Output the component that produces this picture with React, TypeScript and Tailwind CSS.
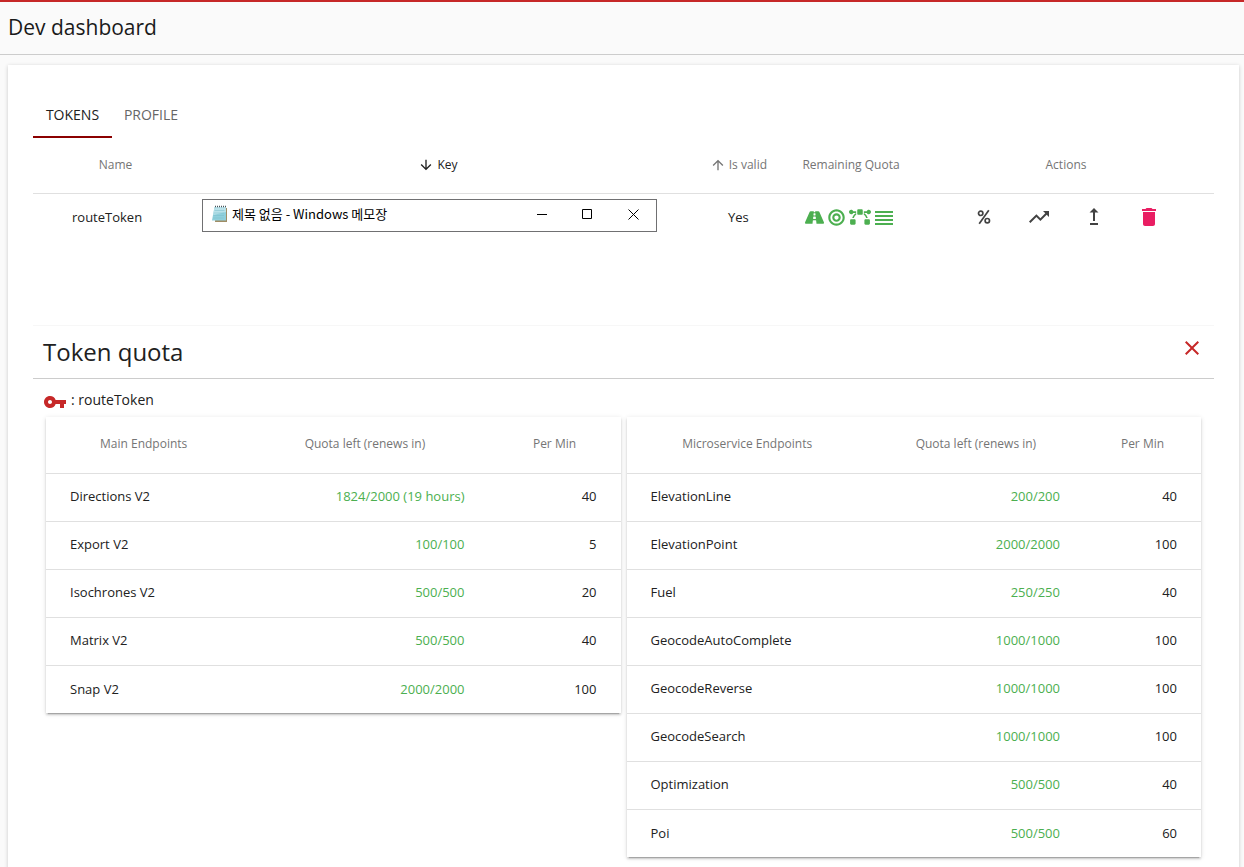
import type { ReactNode } from "react";
import { FaBezierCurve, FaBullseye, FaRoad } from "react-icons/fa";
import {
  MdArrowDownward,
  MdArrowUpward,
  MdClose,
  MdDelete,
  MdTrendingUp,
  MdVpnKey,
} from "react-icons/md";

type Endpoint = { name: string; quota: string; perMin: number };

const mainEndpoints: Endpoint[] = [
  { name: "Directions V2", quota: "1824/2000 (19 hours)", perMin: 40 },
  { name: "Export V2", quota: "100/100", perMin: 5 },
  { name: "Isochrones V2", quota: "500/500", perMin: 20 },
  { name: "Matrix V2", quota: "500/500", perMin: 40 },
  { name: "Snap V2", quota: "2000/2000", perMin: 100 },
];

const microEndpoints: Endpoint[] = [
  { name: "ElevationLine", quota: "200/200", perMin: 40 },
  { name: "ElevationPoint", quota: "2000/2000", perMin: 100 },
  { name: "Fuel", quota: "250/250", perMin: 40 },
  { name: "GeocodeAutoComplete", quota: "1000/1000", perMin: 100 },
  { name: "GeocodeReverse", quota: "1000/1000", perMin: 100 },
  { name: "GeocodeSearch", quota: "1000/1000", perMin: 100 },
  { name: "Optimization", quota: "500/500", perMin: 40 },
  { name: "Poi", quota: "500/500", perMin: 60 },
];

function NotepadIcon() {
  return (
    <svg viewBox="0 0 17 18" className="h-[18px] w-[17px]" aria-hidden="true">
      <path d="M5 3h11v14H4z" fill="#a08c64" />
      <path d="M3.5 2H15v13.5H1z" fill="#8fcfdc" />
      <path d="M3.5 2H15v5L2.3 10z" fill="#b9e2ea" />
      <path d="M3.5 5.5h10M3 8h10M2.5 10.5h10.5M2 13h10.5" stroke="#78bccb" strokeWidth=".5" />
      <path d="M4 1.5h11" stroke="#47565c" strokeWidth="1.5" strokeDasharray="1 1" />
    </svg>
  );
}

function LinesIcon() {
  return (
    <svg viewBox="0 0 18 16" className="h-4 w-[18px]" fill="currentColor" aria-hidden="true">
      <path d="M0 2h18v2H0zM0 6h18v2H0zM0 10h18v2H0zM0 14h18v2H0z" />
    </svg>
  );
}

function PercentIcon() {
  return (
    <svg viewBox="0 0 14 16" className="h-4 w-3.5" fill="none" stroke="currentColor" strokeWidth="1.7" aria-hidden="true">
      <circle cx="3.7" cy="4.3" r="2.2" />
      <circle cx="10.3" cy="11.7" r="2.2" />
      <path d="M11.8 1.2 2.2 14.8" />
    </svg>
  );
}

function PublishIcon() {
  return (
    <svg viewBox="0 0 10 18" className="h-[18px] w-2.5" fill="currentColor" aria-hidden="true">
      <path d="M5 0 9.5 4.5H6V13H4V4.5H.5zM1 15h8v2H1z" />
    </svg>
  );
}

function Action({ label, className, children }: { label: string; className?: string; children: ReactNode }) {
  return (
    <button type="button" aria-label={label} className={"flex size-6 items-center justify-center " + (className ?? "")}>
      {children}
    </button>
  );
}

function MemoWindow() {
  return (
    <div className="flex h-[33px] w-full items-start border border-[#707072] bg-white pt-[5px] pl-2 text-black">
      <div className="flex flex-1 items-center gap-1 font-['Noto_Sans_CJK_KR',sans-serif] text-[13px] leading-[18px]">
        <NotepadIcon />
        <span>제목 없음 - Windows 메모장</span>
      </div>
      <div className="flex">
        <button type="button" aria-label="Minimize" className="flex h-5 w-[46px] items-center justify-center">
          <svg viewBox="0 0 11 11" className="size-[11px]" stroke="currentColor"><path d="M0 5.5h10" /></svg>
        </button>
        <button type="button" aria-label="Maximize" className="flex h-5 w-[45px] items-center justify-center">
          <svg viewBox="0 0 11 11" className="size-[11px]" fill="none" stroke="currentColor"><path d="M.5.5h9v9h-9z" /></svg>
        </button>
        <button type="button" aria-label="Close" className="flex h-5 w-[46px] items-center justify-center">
          <svg viewBox="0 0 11 11" className="size-[11px]" stroke="currentColor"><path d="m.5.5 10 10M10.5.5l-10 10" /></svg>
        </button>
      </div>
    </div>
  );
}

function QuotaTable({ title, rows, nameCol, minCol }: { title: string; rows: Endpoint[]; nameCol: string; minCol: string }) {
  return (
    <div className="bg-white shadow-[0_3px_1px_-2px_rgba(0,0,0,0.2),0_2px_2px_0_rgba(0,0,0,0.14),0_1px_5px_0_rgba(0,0,0,0.12)]">
      <table className="w-full table-fixed border-collapse text-[13px]">
        <colgroup>
          <col className={nameCol} />
          <col />
          <col className={minCol} />
        </colgroup>
        <thead>
          <tr className="h-14 text-[12px] text-[#757575]">
            <th className="pb-0.5 font-normal">{title}</th>
            <th className="pb-0.5 font-normal">Quota left (renews in)</th>
            <th className="pb-0.5 font-normal">Per Min</th>
          </tr>
        </thead>
        <tbody>
          {rows.map((row) => (
            <tr key={row.name} className="h-12 border-t border-[#e0e0e0]">
              <td className="px-6">{row.name}</td>
              <td className="px-6 text-right text-[#4caf50]">{row.quota}</td>
              <td className="px-6 text-right">{row.perMin}</td>
            </tr>
          ))}
        </tbody>
      </table>
    </div>
  );
}

export default function App() {
  return (
    <div className="min-h-screen border-t-2 border-[#c62828] bg-[#fafafa] font-['Open_Sans','Noto_Sans_CJK_KR',sans-serif] text-[#212121]">
      <header className="flex h-[53px] items-center border-b border-[#cccccc] px-2">
        <h1 className="text-[21px] font-medium text-[#1a1a1a]">Dev dashboard</h1>
      </header>
      <div className="pt-2.5 pr-[5px] pl-2">
        <main className="bg-white px-[25px] pt-7 pb-6 shadow-[0_1px_4px_rgba(0,0,0,0.2)]">
          <nav role="tablist" className="flex text-[14px]">
            <button role="tab" aria-selected="true" className="h-[45px] w-[79px] border-b-2 border-[#8b0000]">TOKENS</button>
            <button role="tab" aria-selected="false" className="h-[45px] w-[78px] border-b-2 border-transparent text-[#666666]">PROFILE</button>
          </nav>
          <table className="w-full table-fixed border-collapse text-[13px]">
            <colgroup>
              <col className="w-[165px]" />
              <col />
              <col className="w-[106px]" />
              <col className="w-[134px]" />
              <col className="w-[296px]" />
            </colgroup>
            <thead>
              <tr className="h-[55px] border-b border-[#e0e0e0] text-[12px] text-[#757575]">
                <th className="font-normal">Name</th>
                <th className="font-normal text-[#212121]">
                  <span className="flex items-center justify-center gap-[3px]"><MdArrowDownward size={16} />Key</span>
                </th>
                <th className="pr-[17px] font-normal">
                  <span className="flex items-center justify-end gap-[3px]"><MdArrowUpward size={16} />Is valid</span>
                </th>
                <th className="font-normal">Remaining Quota</th>
                <th className="font-normal">Actions</th>
              </tr>
            </thead>
            <tbody>
              <tr className="h-12">
                <td className="pl-[39px]">routeToken</td>
                <td className="pr-[21px] pb-1 pl-1"><MemoWindow /></td>
                <td className="pl-[50px]">Yes</td>
                <td className="pl-[21px]">
                  <div className="flex items-center gap-1 text-[#4caf50]">
                    <FaRoad size={19} /><FaBullseye size={17} /><FaBezierCurve size={22} /><LinesIcon />
                  </div>
                </td>
                <td>
                  <div className="flex items-center justify-center gap-[31px] text-[#424242]">
                    <Action label="Percent"><PercentIcon /></Action>
                    <Action label="Usage"><MdTrendingUp size={24} /></Action>
                    <Action label="Publish"><PublishIcon /></Action>
                    <Action label="Delete" className="text-[#e91e63]"><MdDelete size={24} /></Action>
                  </div>
                </td>
              </tr>
            </tbody>
          </table>
          <section className="mt-[84px] border-t border-[#f7f7f7]">
            <div className="flex h-[53px] items-center justify-between border-b border-[#cccccc] px-2.5">
              <h2 className="text-[24px]">Token quota</h2>
              <button type="button" aria-label="Close token quota" className="mb-2 text-[#c62828]"><MdClose size={24} /></button>
            </div>
            <div className="flex h-[38px] items-start gap-1 px-2.5 pt-[11px] text-[14px] leading-5">
              <MdVpnKey size={24} className="text-[#c62828]" />
              <span>: routeToken</span>
            </div>
            <div className="grid grid-cols-2 items-start gap-1.5 px-[13px]">
              <QuotaTable title="Main Endpoints" rows={mainEndpoints} nameCol="w-[34%]" minCol="w-[132px]" />
              <QuotaTable title="Microservice Endpoints" rows={microEndpoints} nameCol="w-[42%]" minCol="w-[117px]" />
            </div>
          </section>
        </main>
      </div>
    </div>
  );
}
